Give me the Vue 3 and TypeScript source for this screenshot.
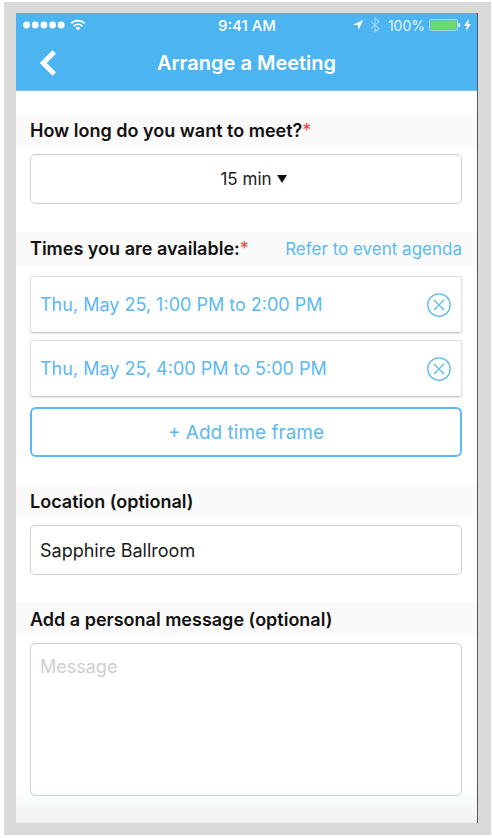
<script setup lang="ts">
import { ref } from 'vue'

interface TimeFrame {
  id: number
  label: string
}

const durations: string[] = ['15 min', '30 min', '45 min', '60 min']
const duration = ref<string>('15 min')
const location = ref<string>('Sapphire Ballroom')
const message = ref<string>('')
const frames = ref<TimeFrame[]>([
  { id: 1, label: 'Thu, May 25, 1:00 PM to 2:00 PM' },
  { id: 2, label: 'Thu, May 25, 4:00 PM to 5:00 PM' },
])
let nextId = 3

function removeFrame(id: number): void {
  frames.value = frames.value.filter((frame) => frame.id !== id)
}

function addFrame(): void {
  frames.value.push({ id: nextId++, label: 'Thu, May 25, 5:00 PM to 6:00 PM' })
}
</script>

<template>
  <div class="stage">
    <main class="phone">
      <header class="header">
        <div class="status">
          <div class="status-side">
            <svg class="dots" width="42" height="8" viewBox="0 0 42 8" fill="#fff" aria-hidden="true">
              <circle cx="3.5" cy="4" r="3.4" />
              <circle cx="12.2" cy="4" r="3.4" />
              <circle cx="20.9" cy="4" r="3.4" />
              <circle cx="29.6" cy="4" r="3.4" />
              <circle cx="38.2" cy="4" r="3.4" />
            </svg>
            <svg width="16" height="12" viewBox="0 0 16 12" fill="none" stroke="#fff" stroke-width="1.7" aria-hidden="true">
              <path d="M1 4.4a10 10 0 0 1 14 0" />
              <path d="M3.6 7.1a6.2 6.2 0 0 1 8.8 0" />
              <path d="M8 11.6 5.6 9.1a3.5 3.5 0 0 1 4.8 0Z" fill="#fff" stroke="none" />
            </svg>
          </div>
          <span class="clock">9:41 AM</span>
          <div class="status-side status-right">
            <svg width="10" height="10" viewBox="0 0 10 10" fill="#fff" aria-hidden="true">
              <path d="M10 0 5.6 10 5 5.2 0 4.7Z" />
            </svg>
            <svg class="bluetooth" width="10" height="16" viewBox="0 0 10 16" fill="none" stroke="#fff" stroke-width="1.2" aria-hidden="true">
              <path d="M.8 4.4 9 11.4 5 15V1l4 3.6-8.2 7" />
            </svg>
            <span class="percent">100%</span>
            <svg class="battery" width="31" height="12" viewBox="0 0 31 12" aria-hidden="true">
              <rect x=".5" y=".5" width="28" height="11" rx="1.5" fill="none" stroke="#a5d7ee" />
              <rect x="1.5" y="1.5" width="26" height="9" rx=".5" fill="#6edc6c" />
              <path d="M29.4 4a2 2 0 0 1 0 4Z" fill="#fff" />
            </svg>
            <svg width="7" height="12" viewBox="0 0 7 12" fill="#fff" aria-hidden="true">
              <path d="M4.9 0 0 6.7h2.8L1.9 12 7 5.1H4.1Z" />
            </svg>
          </div>
        </div>
        <div class="nav">
          <button class="back" type="button" aria-label="Back">
            <svg width="18" height="26" viewBox="0 0 18 26" fill="none" stroke="#fff" stroke-width="5" aria-hidden="true">
              <path d="M15.2 2 4.2 13l11 11" />
            </svg>
          </button>
          <h1 class="title">Arrange a Meeting</h1>
        </div>
      </header>

      <form class="form" @submit.prevent>
        <section>
          <div class="heading">
            <label for="duration">How long do you want to meet?<span class="required">*</span></label>
          </div>
          <div class="body">
            <div class="picker">
              <select id="duration" v-model="duration" class="field select">
                <option v-for="item in durations" :key="item" :value="item">{{ item }}</option>
              </select>
              <svg class="caret" width="10" height="8" viewBox="0 0 10 8" aria-hidden="true">
                <path d="M0 0h10L5 8Z" fill="#111" />
              </svg>
            </div>
          </div>
        </section>

        <section>
          <div class="heading">
            <h2 class="label">Times you are available:<span class="required">*</span></h2>
            <a class="agenda" href="#agenda">Refer to event agenda</a>
          </div>
          <div class="body times">
            <ul class="frames">
              <li v-for="frame in frames" :key="frame.id" class="frame">
                <span>{{ frame.label }}</span>
                <button class="remove" type="button" :aria-label="`Remove ${frame.label}`" @click="removeFrame(frame.id)">
                  <svg width="24" height="24" viewBox="0 0 24 24" fill="none" stroke="#5cb9ef" stroke-width="1.3" aria-hidden="true">
                    <circle cx="12" cy="12" r="11.2" />
                    <path d="m7 7 10 10M17 7 7 17" />
                  </svg>
                </button>
              </li>
            </ul>
            <button class="add" type="button" @click="addFrame">+ Add time frame</button>
          </div>
        </section>

        <section>
          <div class="heading">
            <label for="location">Location (optional)</label>
          </div>
          <div class="body">
            <input id="location" v-model="location" class="field" type="text" />
          </div>
        </section>

        <section>
          <div class="heading">
            <label for="message">Add a personal message (optional)</label>
          </div>
          <div class="body">
            <textarea id="message" v-model="message" class="field message" placeholder="Message"></textarea>
          </div>
        </section>
      </form>
    </main>
  </div>
</template>

<style>
body {
  background: #fff;
}
</style>

<style scoped>
.stage,
.stage * {
  box-sizing: border-box;
}

.stage {
  margin: 2px 1px 3px 4px;
  padding: 11px 13px 12px 12px;
  background: #dadada;
  font-family: Inter, "Liberation Sans", sans-serif;
  color: #111;
}

.phone {
  border-right: 1px solid #55585c;
  background: linear-gradient(to top, #f0f0f0, #fcfdfd 28px, #fff 40px);
}

.header {
  height: 78px;
  background: #4cb4f1;
  border-bottom: 1px solid #7cc7f0;
  color: #fff;
}

.status {
  display: grid;
  grid-template-columns: 1fr auto 1fr;
  align-items: center;
  height: 24px;
  padding: 0 6px 0 7px;
  font-size: 15px;
}

.status-side {
  display: flex;
  align-items: center;
  gap: 5px;
}

.status-right {
  justify-content: flex-end;
  gap: 4px;
}

.clock {
  font-weight: 500;
}

.bluetooth {
  margin: 0 4px 0 3px;
  opacity: 0.45;
}

.percent {
  font-size: 14px;
  opacity: 0.85;
}

.battery {
  flex: none;
}

.nav {
  display: grid;
  grid-template-columns: 60px 1fr 60px;
  align-items: center;
  height: 52px;
}

.back {
  display: flex;
  padding: 0 0 0 23px;
  border: 0;
  background: none;
  cursor: pointer;
}

.title {
  margin: 0;
  font-size: 20px;
  font-weight: 600;
  line-height: 24px;
  text-align: center;
}

.form {
  display: flex;
  flex-direction: column;
  gap: 28px;
  padding: 23px 0 27px;
}

.heading {
  display: flex;
  align-items: center;
  justify-content: space-between;
  height: 33px;
  padding: 0 15px 0 14px;
  background: #fafafa;
  font-size: 18px;
  font-weight: 600;
  white-space: nowrap;
}

.label {
  margin: 0;
  font-size: inherit;
  font-weight: inherit;
}

.required {
  color: #f0443c;
  font-weight: 400;
}

.agenda {
  color: #5cb9ef;
  font-size: 17px;
  font-weight: 400;
  text-decoration: none;
}

.body {
  padding: 7px 15px 0 14px;
}

.field {
  display: block;
  width: 100%;
  height: 50px;
  margin: 0;
  padding: 0 9px;
  border: 1px solid #cfcfcf;
  border-radius: 5px;
  outline: 0;
  background: transparent;
  color: #1a1a1a;
  font-family: inherit;
  font-size: 18px;
}

.picker {
  position: relative;
}

.select {
  appearance: none;
  font-size: 17px;
  text-align: center;
  text-align-last: center;
}

.caret {
  position: absolute;
  top: 21px;
  left: calc(50% + 31px);
  pointer-events: none;
}

.times {
  padding-top: 11px;
}

.frames {
  display: flex;
  flex-direction: column;
  gap: 7px;
  margin: 0 0 10px;
  padding: 0;
  list-style: none;
}

.frame {
  display: flex;
  align-items: center;
  justify-content: space-between;
  height: 57px;
  padding: 0 10px 0 9px;
  border: 1px solid #dedede;
  border-bottom-color: #c8c8c8;
  border-radius: 3px;
  box-shadow: 0 1px 2px #0000001a;
  color: #5cb9ef;
  font-size: 18px;
}

.remove {
  display: flex;
  padding: 0;
  border: 0;
  background: none;
  cursor: pointer;
}

.add {
  display: block;
  width: 100%;
  height: 50px;
  border: 2px solid #5cb9ef;
  border-radius: 6px;
  background: #fff;
  color: #5cb9ef;
  font-family: inherit;
  font-size: 19px;
  cursor: pointer;
}

.message {
  height: 153px;
  padding-top: 12px;
  resize: none;
}

.message::placeholder {
  color: #cfcfcf;
  opacity: 1;
}
</style>
